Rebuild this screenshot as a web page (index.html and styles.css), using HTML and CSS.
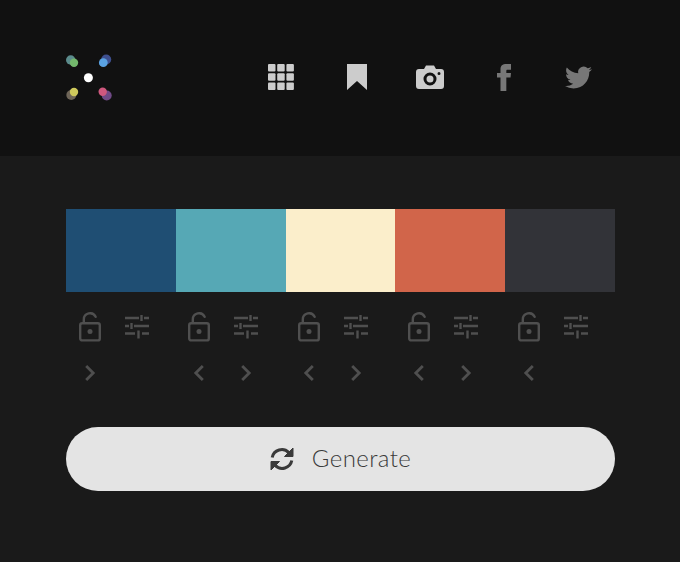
FILE: index.html
```html
<!DOCTYPE html>
<html lang="en">
<head>
  <meta charset="UTF-8" />
  <meta name="viewport" content="width=device-width, initial-scale=1.0"/>
  <title>Palette Generator</title>
  <link rel="stylesheet" href="styles.css">
</head>
<body>
  <svg class="sprites" width="0" height="0">
    <symbol id="lock" viewBox="0 0 24 30">
      <path d="M5.800 10.500V7.500a6.200 6.200 0 0 1 11.800-2.700" fill="none" stroke="currentColor" stroke-width="2.400" stroke-linecap="round"/>
      <rect x="2.200" y="11.200" width="19.600" height="17.200" rx="2" fill="none" stroke="currentColor" stroke-width="2.400"/>
      <circle cx="12" cy="19.500" r="2.500" fill="currentColor"/>
    </symbol>
    <symbol id="sliders" viewBox="0 0 26 24">
      <path d="M1 3h14M20 3h5M17.500 0v6M1 11h4M10 11h15M7.500 8v6M1 18.500h10M18 18.500h7M14.500 15.500v8" fill="none" stroke="currentColor" stroke-width="2.400"/>
    </symbol>
    <symbol id="left" viewBox="0 0 12 16">
      <path d="M9.800 1 2.800 8l7 7" fill="none" stroke="currentColor" stroke-width="2.800"/>
    </symbol>
    <symbol id="right" viewBox="0 0 12 16">
      <path d="M2.200 1l7 7-7 7" fill="none" stroke="currentColor" stroke-width="2.800"/>
    </symbol>
  </svg>

  <header class="top">
    <svg class="logo" width="46" height="47" viewBox="0 0 46 47">
      <circle cx="4.700" cy="6" r="4.700" fill="#5b8b8c"/>
      <circle cx="8" cy="8.700" r="4.200" fill="#73b86c"/>
      <circle cx="40.200" cy="5.500" r="5" fill="#3e4f8e"/>
      <circle cx="37.300" cy="8.700" r="4.400" fill="#5aa2e2"/>
      <circle cx="5.300" cy="41" r="5" fill="#6e6558"/>
      <circle cx="8" cy="38" r="4.200" fill="#cfc95c"/>
      <circle cx="40.700" cy="41.500" r="5" fill="#6f4a86"/>
      <circle cx="36.700" cy="37.700" r="4.200" fill="#cf587e"/>
      <circle cx="22.400" cy="23.700" r="4.500" fill="#fff"/>
    </svg>
    <nav class="nav">
      <a class="nav-item light nudge-left">
        <svg width="26" height="26" viewBox="0 0 26 26" fill="currentColor">
          <rect x="0" y="0" width="7.500" height="7.500" rx="1"/><rect x="9.200" y="0" width="7.500" height="7.500" rx="1"/><rect x="18.400" y="0" width="7.500" height="7.500" rx="1"/>
          <rect x="0" y="9.200" width="7.500" height="7.500" rx="1"/><rect x="9.200" y="9.200" width="7.500" height="7.500" rx="1"/><rect x="18.400" y="9.200" width="7.500" height="7.500" rx="1"/>
          <rect x="0" y="18.400" width="7.500" height="7.500" rx="1"/><rect x="9.200" y="18.400" width="7.500" height="7.500" rx="1"/><rect x="18.400" y="18.400" width="7.500" height="7.500" rx="1"/>
        </svg>
      </a>
      <a class="nav-item light nudge-right">
        <svg width="20" height="26" viewBox="0 0 20 26" fill="currentColor"><path d="M0 0h20v26l-10-9-10 9z"/></svg>
      </a>
      <a class="nav-item light">
        <svg width="28" height="24" viewBox="0 0 28 24" fill="currentColor">
          <path fill-rule="evenodd" d="M3 4h5l2-3.500h8L20 4h5a3 3 0 0 1 3 3v14a3 3 0 0 1-3 3H3a3 3 0 0 1-3-3V7a3 3 0 0 1 3-3zM14 7.500a6.500 6.500 0 1 0 0 13 6.500 6.500 0 0 0 0-13zM14 10.500a3.500 3.500 0 1 1 0 7 3.500 3.500 0 0 1 0-7zM23 7a1.500 1.500 0 1 0 0 3 1.500 1.500 0 0 0 0-3z"/>
        </svg>
      </a>
      <a class="nav-item dim">
        <svg width="14" height="27" viewBox="6 0 12 24" preserveAspectRatio="none" fill="currentColor">
          <path d="M9 8H6v4h3v12h5V12h3.600l.4-4h-4V6.300c0-1 .2-1.300 1.100-1.300H18V0h-3.800C10.600 0 9 1.600 9 4.600V8z"/>
        </svg>
      </a>
      <a class="nav-item dim">
        <svg width="29" height="27" viewBox="0 0 24 24" fill="currentColor">
          <path d="M23.953 4.570a10 10 0 0 1-2.825.775 4.958 4.958 0 0 0 2.163-2.723c-.951.555-2.005.959-3.127 1.184a4.920 4.920 0 0 0-8.384 4.482C7.690 8.095 4.067 6.130 1.640 3.162a4.822 4.822 0 0 0-.666 2.475c0 1.710.870 3.213 2.188 4.096a4.904 4.904 0 0 1-2.228-.616v.060a4.923 4.923 0 0 0 3.946 4.827 4.996 4.996 0 0 1-2.212.085 4.936 4.936 0 0 0 4.604 3.417 9.867 9.867 0 0 1-6.102 2.105c-.390 0-.779-.023-1.170-.067a13.995 13.995 0 0 0 7.557 2.209c9.053 0 13.998-7.496 13.998-13.985 0-.210 0-.420-.015-.630A9.935 9.935 0 0 0 24 4.590z"/>
        </svg>
      </a>
    </nav>
  </header>

  <main class="content">
    <div class="palette">
      <div class="column">
        <div class="swatch navy"></div>
        <div class="tools">
          <span class="tool"><svg class="lock-icon"><use href="#lock"/></svg></span>
          <span class="tool"><svg class="sliders-icon"><use href="#sliders"/></svg></span>
        </div>
        <div class="moves">
          <span class="tool"><svg class="arrow-icon"><use href="#right"/></svg></span>
        </div>
      </div>
      <div class="column">
        <div class="swatch teal"></div>
        <div class="tools">
          <span class="tool"><svg class="lock-icon"><use href="#lock"/></svg></span>
          <span class="tool"><svg class="sliders-icon"><use href="#sliders"/></svg></span>
        </div>
        <div class="moves">
          <span class="tool"><svg class="arrow-icon"><use href="#left"/></svg></span>
          <span class="tool"><svg class="arrow-icon"><use href="#right"/></svg></span>
        </div>
      </div>
      <div class="column">
        <div class="swatch cream"></div>
        <div class="tools">
          <span class="tool"><svg class="lock-icon"><use href="#lock"/></svg></span>
          <span class="tool"><svg class="sliders-icon"><use href="#sliders"/></svg></span>
        </div>
        <div class="moves">
          <span class="tool"><svg class="arrow-icon"><use href="#left"/></svg></span>
          <span class="tool"><svg class="arrow-icon"><use href="#right"/></svg></span>
        </div>
      </div>
      <div class="column">
        <div class="swatch coral"></div>
        <div class="tools">
          <span class="tool"><svg class="lock-icon"><use href="#lock"/></svg></span>
          <span class="tool"><svg class="sliders-icon"><use href="#sliders"/></svg></span>
        </div>
        <div class="moves">
          <span class="tool"><svg class="arrow-icon"><use href="#left"/></svg></span>
          <span class="tool"><svg class="arrow-icon"><use href="#right"/></svg></span>
        </div>
      </div>
      <div class="column">
        <div class="swatch charcoal"></div>
        <div class="tools">
          <span class="tool"><svg class="lock-icon"><use href="#lock"/></svg></span>
          <span class="tool"><svg class="sliders-icon"><use href="#sliders"/></svg></span>
        </div>
        <div class="moves">
          <span class="tool"><svg class="arrow-icon"><use href="#left"/></svg></span>
        </div>
      </div>
    </div>

    <button class="generate" type="button">
      <svg width="24" height="24" viewBox="0 0 24 24">
        <path d="M2.200 10.500A9.800 9.800 0 0 1 18.800 5.600M21.800 13.500A9.800 9.800 0 0 1 5.200 18.400" fill="none" stroke="currentColor" stroke-width="3"/>
        <path d="M23 1v8.500h-8.500zM1 23v-8.500h8.500z" fill="currentColor" stroke="currentColor" stroke-linejoin="round"/>
      </svg>
      <span class="label">Generate</span>
    </button>
  </main>
</body>
</html>
```

FILE: styles.css
```css
* {
  box-sizing: border-box;
}

body {
  margin: 0;
  background: #1a1a1a;
  font-family: "Lato", sans-serif;
}

.sprites {
  display: block;
}

.top {
  display: flex;
  align-items: center;
  justify-content: space-between;
  height: 156px;
  padding: 0 65px 2px 66px;
  background: #111;
}

.logo {
  display: block;
}

.nav {
  display: flex;
}

.nav-item {
  display: flex;
  align-items: center;
  justify-content: center;
  width: 74px;
}

.nudge-left {
  padding-right: 2px;
}

.nudge-right {
  padding-left: 2px;
}

.light {
  color: #ccc;
}

.dim {
  color: #777;
}

.content {
  padding: 53px 65px 0 66px;
}

.palette {
  display: flex;
}

.column {
  flex: 1;
}

.swatch {
  height: 83px;
}

.navy { background: #1f4e73; }
.teal { background: #56a8b5; }
.cream { background: #fbeecb; }
.coral { background: #d1654a; }
.charcoal { background: #323338; }

.tools,
.moves {
  display: flex;
  color: #4f4f4f;
}

.tools {
  margin-top: 20px;
  height: 30px;
}

.moves {
  margin-top: 23px;
  height: 16px;
}

.tool {
  display: flex;
  align-items: center;
  justify-content: center;
  width: 47px;
}

.lock-icon {
  width: 24px;
  height: 30px;
}

.sliders-icon {
  width: 26px;
  height: 24px;
}

.arrow-icon {
  width: 12px;
  height: 16px;
}

.generate {
  display: flex;
  align-items: center;
  justify-content: center;
  gap: 18px;
  width: 100%;
  height: 64px;
  margin-top: 46px;
  padding: 0;
  border: none;
  border-radius: 32px;
  background: #e4e4e4;
  color: #3a3a3a;
  font-family: inherit;
  font-size: 24px;
  font-weight: 300;
  letter-spacing: 0.4px;
}

.label {
  padding-bottom: 3px;
}
```
